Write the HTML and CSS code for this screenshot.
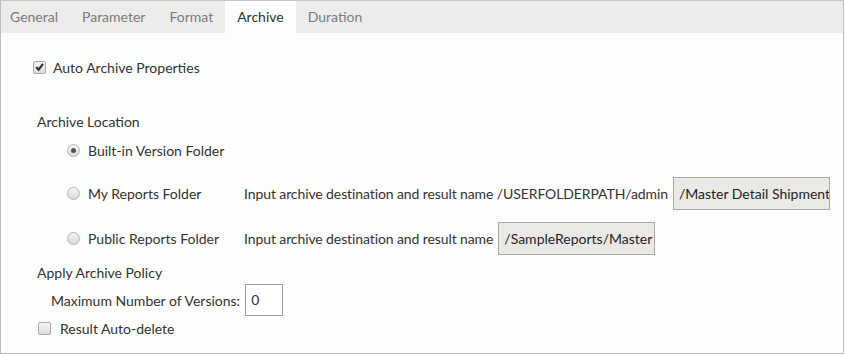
FILE: index.html
```html
<!DOCTYPE html>
<html>
<head>
<meta charset="utf-8">
<link rel="stylesheet" href="styles.css">
</head>
<body>
<div class="panel">
  <div class="tabs">
    <div class="tab first">General</div>
    <div class="tab">Parameter</div>
    <div class="tab">Format</div>
    <div class="tab active">Archive</div>
    <div class="tab">Duration</div>
  </div>
  <div class="content">
    <div class="row auto">
      <span class="cb"><svg width="12" height="12" viewBox="0 0 12 12"><path d="M2.4 6 L5 8.9 L9.8 2.6" fill="none" stroke="#333" stroke-width="2.4"/></svg></span>
      <span class="cb-label">Auto Archive Properties</span>
    </div>
    <div class="row heading loc">Archive Location</div>
    <div class="opt builtin">
      <div class="opt-label"><span class="rb checked"></span>Built-in Version Folder</div>
    </div>
    <div class="opt my">
      <div class="opt-label"><span class="rb"></span>My Reports Folder</div>
      <div class="dest"><span class="dest-text">Input archive destination and result name /USERFOLDERPATH/admin</span><span class="path">/Master Detail Shipment</span></div>
    </div>
    <div class="opt pub">
      <div class="opt-label"><span class="rb"></span>Public Reports Folder</div>
      <div class="dest"><span class="dest-text">Input archive destination and result name</span><span class="path">/SampleReports/Master</span></div>
    </div>
    <div class="row heading policy">Apply Archive Policy</div>
    <div class="maxv"><span>Maximum Number of Versions:</span><span class="num">0</span></div>
    <div class="row del">
      <span class="cb"></span>
      <span class="del-label">Result Auto-delete</span>
    </div>
  </div>
</div>
</body>
</html>
```
FILE: styles.css
```css
html, body {
  margin: 0;
  padding: 0;
  background: #ffffff;
}
body {
  font-family: Lato, "Open Sans", sans-serif;
  font-size: 14px;
  color: #333;
}
.panel {
  width: 842px;
  height: 352px;
  border: 1px solid #bfbdbf;
  border-top-color: #c6c3c8;
  background: #fcfefc;
  display: flex;
  flex-direction: column;
}
.tabs {
  display: flex;
  height: 32px;
  background: #ecedea;
}
.tab {
  padding: 0 12px;
  line-height: 32px;
  color: #7a7a7a;
}
.tab.first {
  padding-left: 9px;
}
.tab.active {
  background: #fcfefc;
  color: #333;
}
.content {
  display: flex;
  flex-direction: column;
  padding-top: 24px;
}
.row {
  display: flex;
  align-items: center;
  height: 20px;
}
.auto {
  padding-left: 32px;
}
.cb {
  width: 11px;
  height: 11px;
  border: 1px solid #a8a8a8;
  border-radius: 2px;
  background: linear-gradient(#f7f7f7, #dcdcdc);
  display: inline-flex;
  align-items: center;
  justify-content: center;
  flex: none;
}
.cb svg {
  display: block;
}
.cb-label {
  margin-left: 7px;
}
.heading {
  padding-left: 36px;
}
.loc {
  margin-top: 34px;
}
.opt {
  display: flex;
  align-items: center;
  padding-left: 66px;
}
.opt-label {
  width: 177px;
  display: flex;
  align-items: center;
  flex: none;
}
.rb {
  width: 11px;
  height: 11px;
  border: 1px solid #b4b4b4;
  border-radius: 50%;
  background: linear-gradient(#f4f4f4, #d9d9d9);
  display: inline-flex;
  align-items: center;
  justify-content: center;
  margin-right: 8px;
  flex: none;
}
.rb.checked::after {
  content: "";
  width: 5px;
  height: 5px;
  border-radius: 50%;
  background: #505050;
}
.builtin {
  margin-top: 9px;
  height: 20px;
}
.my {
  margin-top: 17px;
  height: 33px;
}
.pub {
  margin-top: 12px;
  height: 33px;
}
.dest {
  display: flex;
  align-items: center;
  white-space: nowrap;
}
.dest-text {
  letter-spacing: -0.1px;
}
.path {
  display: inline-block;
  width: 150px;
  height: 31px;
  line-height: 31px;
  padding-left: 5px;
  margin-left: 5px;
  border: 1px solid #aaaaaa;
  background: #ebe9e6;
  color: #1e1e2a;
  overflow: hidden;
  white-space: nowrap;
}
.policy {
  margin-top: 7px;
}
.maxv {
  display: flex;
  align-items: center;
  padding-left: 50px;
  margin-top: 2px;
  height: 32px;
}
.num {
  display: inline-block;
  width: 31px;
  height: 30px;
  line-height: 30px;
  padding-left: 5px;
  margin-left: 5px;
  border: 1px solid #9a9a9a;
  background: #ffffff;
}
.del {
  margin-top: 2px;
  padding-left: 37px;
}
.del-label {
  margin-left: 9px;
}
```
